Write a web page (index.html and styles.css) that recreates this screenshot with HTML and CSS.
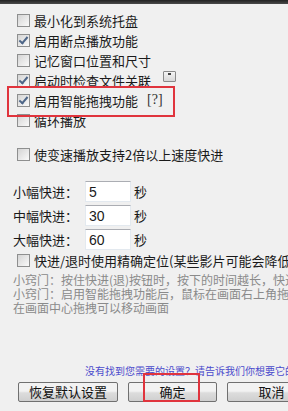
FILE: index.html
```html
<!DOCTYPE html>
<html lang="zh-CN">
<head>
    <meta charset="UTF-8">
    <meta name="viewport" content="width=device-width, initial-scale=1.0">
    <title>播放设置</title>
    <link rel="stylesheet" href="styles.css">
</head>
<body>
    <div class="topbar"></div>

    <div class="page">
        <div class="options">
            <div class="row"><span class="cb"></span>最小化到系统托盘</div>
            <div class="row"><span class="cb checked"></span>启用断点播放功能</div>
            <div class="row"><span class="cb"></span>记忆窗口位置和尺寸</div>
            <div class="row"><span class="cb checked"></span>启动时检查文件关联<span class="mini-btn"></span></div>
            <div class="row"><span class="cb checked"></span>启用智能拖拽功能<span class="help">[?]</span></div>
            <div class="row"><span class="cb"></span>循环播放</div>
        </div>

        <div class="row speed"><span class="cb"></span>使变速播放支持2倍以上速度快进</div>

        <div class="steps">
            <div class="step"><span class="step-label">小幅快进：</span><span class="field">5</span><span class="unit">秒</span></div>
            <div class="step"><span class="step-label">中幅快进：</span><span class="field">30</span><span class="unit">秒</span></div>
            <div class="step"><span class="step-label">大幅快进：</span><span class="field">60</span><span class="unit">秒</span></div>
        </div>

        <div class="row exact"><span class="cb"></span>快进/退时使用精确定位(某些影片可能会降低速度)</div>

        <div class="tips">
            <div>小窍门：按住快进(退)按钮时，按下的时间越长，快进(退)越快</div>
            <div>小窍门：启用智能拖拽功能后，鼠标在画面右上角拖拽可以缩放画面，</div>
            <div>在画面中心拖拽可以移动画面</div>
        </div>

        <div class="feedback">没有找到您需要的设置？请告诉我们你想要它的功能</div>

        <div class="buttons">
            <span class="btn reset">恢复默认设置</span>
            <span class="btn ok">确定</span>
            <span class="btn cancel">取消</span>
        </div>
    </div>

    <div class="mark mark-drag"></div>
    <div class="mark mark-ok"></div>
</body>
</html>
```

FILE: styles.css
```css
html, body {
    margin: 0;
    padding: 0;
}
body {
    width: 288px;
    height: 411px;
    overflow: hidden;
    position: relative;
    background-color: #f0f0f0;
    font-family: "Noto Sans CJK SC", "DejaVu Sans", sans-serif;
    font-size: 13px;
    color: #1a1a1a;
    white-space: nowrap;
}
.topbar {
    height: 4px;
    background: linear-gradient(#222, #4a4a4a);
}
.page {
    padding-top: 6px;
}
.row {
    display: flex;
    align-items: center;
    height: 20px;
    padding-left: 17px;
}
.cb {
    flex: none;
    width: 11px;
    height: 11px;
    margin-right: 4px;
    border: 1px solid #8e8f8f;
    background: linear-gradient(135deg, #d4d4d4, #fafafa);
    position: relative;
}
.cb.checked::after {
    content: "";
    position: absolute;
    left: 3px;
    top: 0px;
    width: 3px;
    height: 7px;
    border: solid #4e6688;
    border-width: 0 2px 2px 0;
    transform: rotate(40deg);
}
.mini-btn {
    display: inline-block;
    width: 11px;
    height: 9px;
    margin-left: 12px;
    margin-top: -8px;
    border: 1px solid #8a8a8a;
    border-radius: 1px;
    background: linear-gradient(#f4f4f4, #d8d8d8);
    position: relative;
}
.mini-btn::after {
    content: "";
    position: absolute;
    left: 4px;
    top: 1px;
    width: 3px;
    height: 2px;
    background: #444;
}
.help {
    margin-left: 9px;
    color: #333;
    font-family: "Liberation Serif", serif;
    font-size: 14px;
}
.speed {
    margin-top: 14px;
}
.steps {
    margin-top: 15px;
}
.step {
    display: flex;
    align-items: center;
    height: 24px;
    padding-left: 13px;
}
.step-label {
    width: 72px;
}
.field {
    box-sizing: border-box;
    width: 46px;
    height: 21px;
    padding: 2px 0 0 3px;
    background: #fff;
    border: 1px solid #e3e9ef;
    border-top-color: #abadb3;
    font-family: "Liberation Sans", sans-serif;
    font-size: 14px;
    line-height: 17px;
}
.unit {
    margin-left: 3px;
}
.exact {
    height: 19px;
}
.tips {
    margin-top: 3px;
    padding-left: 13px;
    font-size: 12px;
    line-height: 14px;
    color: #8a8a8a;
}
.feedback {
    margin-top: 49px;
    padding-left: 85px;
    font-size: 10px;
    line-height: 14px;
    color: #4b4bcc;
}
.buttons {
    display: flex;
    gap: 10px;
    margin-top: 4px;
    padding-left: 18px;
}
.btn {
    flex: none;
    box-sizing: border-box;
    height: 20px;
    border: 1px solid #707070;
    border-radius: 2px;
    background: linear-gradient(#f2f2f2 45%, #dcdcdc 55%, #cfcfcf);
    text-align: center;
    font-size: 13px;
    line-height: 18px;
    color: #111;
}
.reset {
    width: 100px;
}
.ok, .cancel {
    width: 89px;
}
.mark {
    position: absolute;
    border: 2px solid #e0343d;
}
.mark-drag {
    left: 7px;
    top: 86px;
    width: 164px;
    height: 27px;
}
.mark-ok {
    left: 143px;
    top: 373px;
    width: 53px;
    height: 25px;
}
```
